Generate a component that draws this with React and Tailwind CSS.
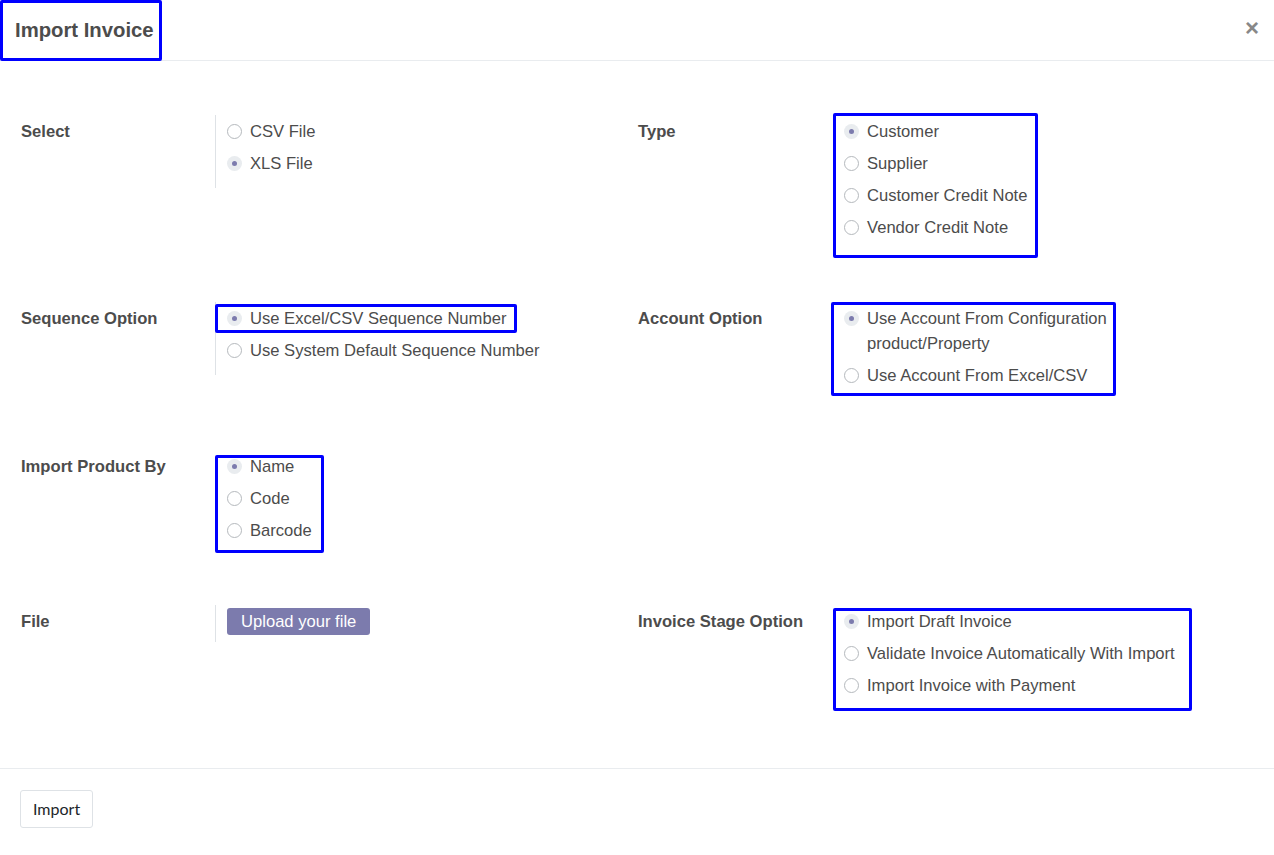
import React from 'react';

const FONT = { fontFamily: '"Liberation Sans", Arial, sans-serif' };

function Radio({ checked, children }) {
  return (
    <label className="flex items-start gap-2 py-[3.5px] leading-[25px] text-[16.6px] text-[#4c4c4c]">
      {checked ? (
        <span className="mt-[5px] w-[15px] h-[15px] rounded-full bg-[#e9ecef] flex items-center justify-center shrink-0">
          <span className="w-[5px] h-[5px] rounded-full bg-[#7c7bad]" />
        </span>
      ) : (
        <span className="mt-[5px] w-[15px] h-[15px] rounded-full border border-[#b5b9bd] bg-white shrink-0" />
      )}
      <span>{children}</span>
    </label>
  );
}

function Field({ label, line = true, lineCls = 'pb-[9px]', box, children }) {
  return (
    <div className="flex">
      <div className="w-[194px] shrink-0 text-[16.6px] font-bold leading-[25px] text-[#4c4c4c] pt-[3.5px]">{label}</div>
      <div className="relative flex-1">
        <div className={`pl-[11px] ${line ? 'border-l border-[#dee2e6] ' + lineCls : 'border-l border-transparent'}`}>
          {children}
        </div>
        {box && (
          <div className="absolute border-[3px] border-[#0000ff] rounded-[2px] pointer-events-none" style={box} />
        )}
      </div>
    </div>
  );
}

export default function App() {
  return (
    <div className="w-[1274px] h-[855px] bg-white flex flex-col" style={FONT}>
      {/* Header */}
      <div className="relative h-[61px] border-b border-[#e9ecef] flex items-center justify-between px-[15px] shrink-0">
        <h4 className="text-[20.3px] font-bold text-[#4c4c4c]">Import Invoice</h4>
        <button className="text-[24px] font-bold text-[#888] leading-none mr-0 -mt-[5px]">×</button>
        <div className="absolute left-0 top-0 w-[162px] h-[61px] border-[3px] border-[#0000ff] rounded-[2px]" />
      </div>

      {/* Body */}
      <div className="flex-1 pt-[54px] px-[21px]">
        <div className="grid grid-cols-[617px_1fr] gap-y-[59px]">
          <Field label="Select">
            <Radio>CSV File</Radio>
            <Radio checked>XLS File</Radio>
          </Field>
          <Field label="Type" line={false} box={{ left: 1, top: -2, width: 205, height: 145 }}>
            <Radio checked>Customer</Radio>
            <Radio>Supplier</Radio>
            <Radio>Customer Credit Note</Radio>
            <Radio>Vendor Credit Note</Radio>
          </Field>

          <Field label="Sequence Option" box={{ left: 0, top: 2, width: 302, height: 29 }}>
            <Radio checked>Use Excel/CSV Sequence Number</Radio>
            <Radio>Use System Default Sequence Number</Radio>
          </Field>
          <Field label="Account Option" line={false} box={{ left: -1, top: 0, width: 285, height: 94 }}>
            <div className="w-[270px]">
              <Radio checked>Use Account From Configuration product/Property</Radio>
            </div>
            <Radio>Use Account From Excel/CSV</Radio>
          </Field>

          <Field label="Import Product By" line={false} box={{ left: 0, top: 5, width: 109, height: 98 }}>
            <Radio checked>Name</Radio>
            <Radio>Code</Radio>
            <Radio>Barcode</Radio>
          </Field>
          <div />

          <Field label="File" lineCls="pt-[3px] pb-[7px]">
            <button className="bg-[#7c7bad] text-white text-[16.6px] leading-[25px] px-[14px] pt-[1px] pb-[1px] rounded-[3px]">
              Upload your file
            </button>
          </Field>
          <Field label="Invoice Stage Option" line={false} box={{ left: 1, top: 3, width: 359, height: 103 }}>
            <Radio checked>Import Draft Invoice</Radio>
            <Radio>Validate Invoice Automatically With Import</Radio>
            <Radio>Import Invoice with Payment</Radio>
          </Field>
        </div>
      </div>

      {/* Footer */}
      <div className="h-[87px] border-t border-[#e9ecef] px-[20px] pt-[21px] shrink-0">
        <button
          className="h-[38px] px-[12px] border border-[#dee2e6] rounded-[3px] text-[16px] text-[#212529] bg-white"
          style={{ fontFamily: 'Lato, "Liberation Sans", sans-serif' }}
        >
          Import
        </button>
      </div>
    </div>
  );
}
